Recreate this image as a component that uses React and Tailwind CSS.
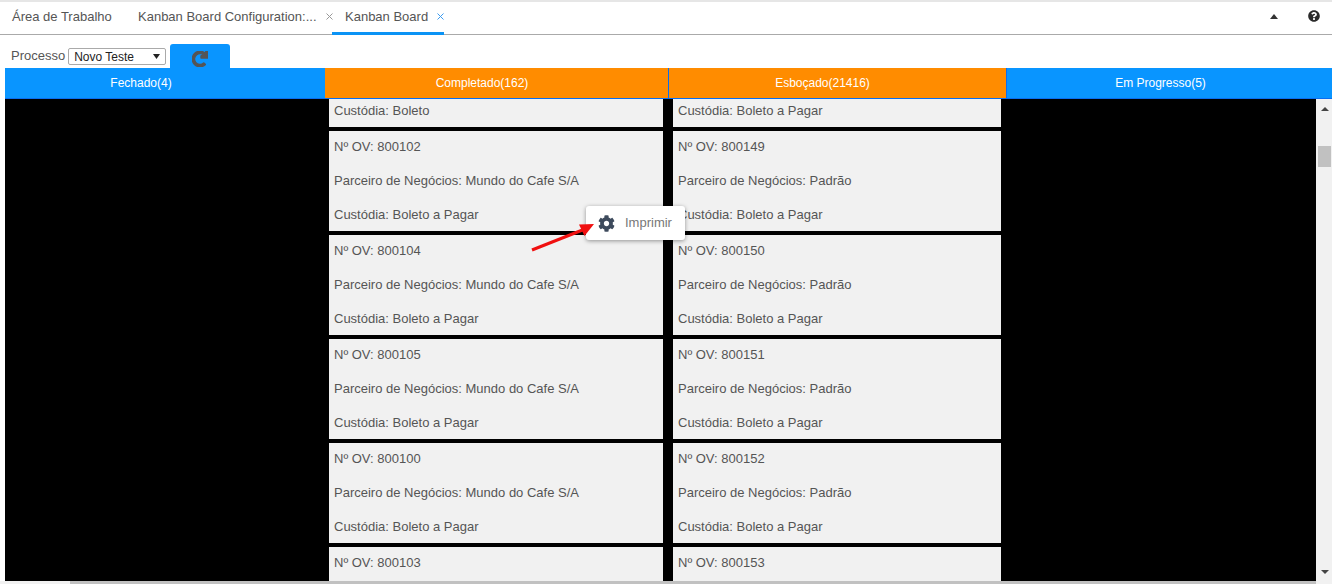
import React from "react";
import { FaCog, FaRedo, FaQuestionCircle } from "react-icons/fa";

const left = [
  ["800102", "Mundo do Cafe S/A"],
  ["800104", "Mundo do Cafe S/A"],
  ["800105", "Mundo do Cafe S/A"],
  ["800100", "Mundo do Cafe S/A"],
  ["800103", "Mundo do Cafe S/A"],
];
const right = [
  ["800149", "Padrão"],
  ["800150", "Padrão"],
  ["800151", "Padrão"],
  ["800152", "Padrão"],
  ["800153", "Padrão"],
];

function Card({ id, partner }) {
  return (
    <div className="h-[100px] bg-[#f1f1f1] px-[5px] pt-[6px] text-[13px] leading-[20px] text-[#555] shrink-0">
      <div className="h-[34px]">Nº OV: {id}</div>
      <div className="h-[34px]">Parceiro de Negócios: {partner}</div>
      <div className="h-[26px]">Custódia: Boleto a Pagar</div>
    </div>
  );
}

function Column({ cards, first, className }) {
  return (
    <div className={"flex flex-col gap-[4px] overflow-hidden " + className}>
      <div className="h-[100px] -mt-[72px] shrink-0 bg-[#f1f1f1] px-[5px] pt-[74px] text-[13px] leading-[20px] text-[#555]">
        {first}
      </div>
      {cards.map(([id, p]) => (
        <Card key={id} id={id} partner={p} />
      ))}
    </div>
  );
}

function Head({ children, className }) {
  return (
    <div className={"h-[31px] pb-[1px] flex items-center justify-center border-b border-[#0a6df0] text-[12px] text-white " + className}>
      {children}
    </div>
  );
}

export default function App() {
  return (
    <div className="relative h-[584px] w-[1332px] overflow-hidden bg-white font-['Liberation_Sans',Arial,sans-serif]">
      <div className="h-[35px] border-t-2 border-t-[#e6e6e6] border-b border-b-[#aaa] flex items-stretch text-[13px] text-[#555] relative whitespace-nowrap">
        <div className="ml-[12px] pt-[5px] w-[126px]">Área de Trabalho</div>
        <div className="pt-[5px] flex w-[194px]">
          <span>Kanban Board Configuration:...</span>
          <span className="ml-[9px] mt-[6px] text-[#999]"><X /></span>
        </div>
        <div className="w-[112px] px-[13px] pt-[5px] flex border-b-[3px] border-[#0a93f5] h-[33px]">
          <span>Kanban Board</span>
          <span className="ml-[9px] mt-[6px] text-[#3b9bf0]"><X /></span>
        </div>
        <div className="ml-auto flex pt-[10px] pr-[12px]">
          <svg width="8" height="5" viewBox="0 0 8 5" className="mt-[2px] mr-[30px]"><path d="M4 0 8 5H0z" fill="#333" /></svg>
          <FaQuestionCircle className="-mt-[2px] text-[12px] text-[#2b2b2b]" />
        </div>
      </div>

      <div className="h-[33px] flex items-start pl-[11px] pt-[9px]">
        <span className="text-[13px] leading-[20px] text-[#555] pt-[2px]">Processo</span>
        <div className="ml-[3px] mt-[4px] w-[98px] h-[17px] border border-[#aaa] rounded-[2px] flex items-center justify-between pl-[5px] pr-[5px] text-[12px] text-[#222]">
          <span>Novo Teste</span>
          <svg width="7" height="5" viewBox="0 0 7 5"><path d="M0 0h7L3.500 5z" fill="#222" /></svg>
        </div>
        <div className="ml-[4px] w-[60px] h-[24px] bg-[#0995ff] rounded-t-[3px] flex items-start justify-center overflow-hidden">
          <FaRedo className="mt-[7px] text-[16px] text-[#555]" stroke="currentColor" strokeWidth="45" />
        </div>
      </div>

      <div className="flex pl-[5px]">
        <Head className="w-[320px] bg-[#0995ff] pr-[48px]">Fechado(4)</Head>
        <Head className="w-[343px] bg-[#ff8c00] pr-[29px]">Completado(162)</Head>
        <Head className="w-[338px] bg-[#ff8c00] border-l border-l-[#0a6df0] pr-[30px]">Esboçado(21416)</Head>
        <Head className="w-[326px] bg-[#0995ff] border-l border-l-[#0a6df0] pr-[18px]">Em Progresso(5)</Head>
      </div>

      <div className="flex h-[482px] ml-[5px] w-[1311px] bg-black">
        <div className="w-[324px]" />
        <Column className="w-[334px]" cards={left} first="Custódia: Boleto" />
        <div className="w-[10px]" />
        <Column className="w-[328px]" cards={right} first="Custódia: Boleto a Pagar" />
      </div>

      <div className="absolute right-0 top-[99px] h-[482px] w-[16px] bg-[#f1f1f1]">
        <svg width="8" height="4" viewBox="0 0 8 4" className="absolute left-[5px] top-[8px]"><path d="M4 0 8 4H0z" fill="#444" /></svg>
        <div className="absolute left-[2px] top-[47px] w-[13px] h-[21px] bg-[#c1c1c1]" />
        <svg width="8" height="4" viewBox="0 0 8 4" className="absolute left-[5px] bottom-[7px]"><path d="M0 0h8L4 4z" fill="#444" /></svg>
      </div>
      <div className="absolute left-0 top-[581px] h-[3px] w-[1332px] bg-[#f1f1f1]">
        <div className="ml-[70px] h-[3px] w-[1246px] bg-[#c1c1c1]" />
      </div>

      <div className="absolute left-[586px] top-[206px] w-[99px] h-[34px] bg-white rounded-[3px] shadow-[0_1px_4px_rgba(0,0,0,0.4)] flex items-center pl-[12px]">
        <FaCog className="text-[17px] text-[#3d4a5c]" />
        <span className="ml-[10px] text-[13px] text-[#777]">Imprimir</span>
      </div>
      <svg className="absolute left-[530px] top-[222px]" width="68" height="30" viewBox="0 0 68 30">
        <path d="M2 28 55 7" stroke="#f01010" strokeWidth="3" />
        <path d="M64 2 49 2.500 54.500 14z" fill="#f01010" />
      </svg>
    </div>
  );
}

function X() {
  return (
    <svg width="7" height="7" viewBox="0 0 7 7" stroke="currentColor" strokeWidth="1"><path d="M.5.5l6 6M6.500.5l-6 6" /></svg>
  );
}
